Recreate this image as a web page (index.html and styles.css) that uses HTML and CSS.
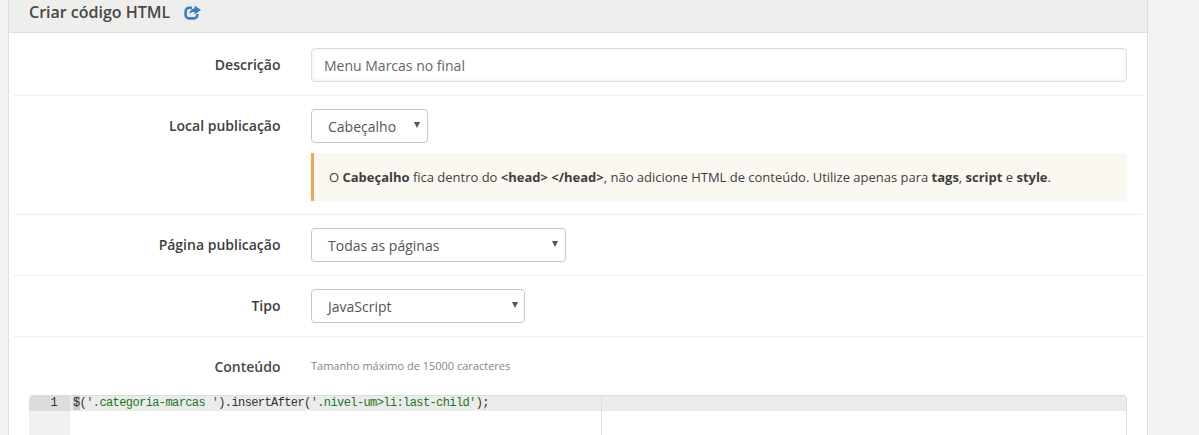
FILE: index.html
```html
<!DOCTYPE html>
<html lang="pt">
<head>
<meta charset="utf-8">
<title>Criar código HTML</title>
<link rel="stylesheet" href="styles.css">
</head>
<body>
<div class="panel">
  <header class="panel-head">
    <h1 class="title">Criar código HTML</h1>
    <svg class="share" viewBox="0 0 17 15" width="17" height="15" aria-hidden="true">
      <path fill="none" stroke="#3a7cc0" stroke-width="2.6" d="M8 2.800H5.200a3.600 3.600 0 0 0-3.600 3.600v3.400a3.600 3.600 0 0 0 3.600 3.600h4.600a3.600 3.600 0 0 0 3.600-3.600V9"/>
      <path fill="#3a7cc0" d="M10.500.5L17 5l-6.500 4.500V7C8 7 6.500 7.500 5.500 9.500c0-3.500 2-6 5-6z"/>
    </svg>
  </header>
  <div class="row row-desc">
    <label class="label">Descrição</label>
    <div class="field"><input class="input" type="text" value="Menu Marcas no final"></div>
  </div>
  <div class="row row-local">
    <label class="label">Local publicação</label>
    <div class="field">
      <div class="select select-local">Cabeçalho</div>
      <p class="notice">O <b>Cabeçalho</b> fica dentro do <b>&lt;head&gt; &lt;/head&gt;</b>, não adicione HTML de conteúdo. Utilize apenas para <b>tags</b>, <b>script</b> e <b>style</b>.</p>
    </div>
  </div>
  <div class="row row-select">
    <label class="label">Página publicação</label>
    <div class="field"><div class="select select-page">Todas as páginas</div></div>
  </div>
  <div class="row row-select">
    <label class="label">Tipo</label>
    <div class="field"><div class="select select-type">JavaScript</div></div>
  </div>
  <div class="row row-content">
    <label class="label label-content">Conteúdo</label>
    <div class="field"><small class="hint">Tamanho máximo de 15000 caracteres</small></div>
  </div>
  <div class="editor">
    <div class="gutter"><div class="gutter-cell">1</div></div>
    <div class="code">
      <div class="line"><span class="cursor">$</span>(<span class="str">'.categoria-marcas '</span>).insertAfter(<span class="str">'.nivel-um&gt;li:last-child'</span>);</div>
      <div class="margin-line"></div>
    </div>
  </div>
</div>
</body>
</html>
```
FILE: styles.css
```css
* { box-sizing: border-box; }
html, body { margin: 0; height: 100%; overflow: hidden; }
body {
  background: #f3f3f2;
  font-family: "Open Sans", sans-serif;
  font-size: 14px;
  color: #404040;
}
.panel {
  width: 1140px;
  height: 435px;
  margin-left: 8px;
  background: #fff;
  border-left: 1px solid #dedede;
  border-right: 1px solid #dedede;
  overflow: hidden;
}
.panel-head {
  height: 33px;
  padding: 0 0 8px 20px;
  display: flex;
  align-items: center;
  gap: 14px;
  background: #eeeeec;
  border-bottom: 1px solid #dedede;
}
.title {
  margin: 0;
  font-size: 16px;
  font-weight: 600;
  color: #484848;
  line-height: 24px;
}
.share { display: block; }
.row {
  margin: 0 4px 0 5px;
  display: flex;
  align-items: flex-start;
  border-bottom: 1px solid #eeeeee;
}
.row-desc { height: 63px; padding-top: 15px; }
.row-local { height: 119px; padding-top: 13px; }
.row-select { height: 61px; padding-top: 13px; }
.row-content { border-bottom: 0; height: 58px; padding-top: 19px; }
.label {
  width: 266.500px;
  flex: none;
  text-align: right;
  font-weight: 600;
  line-height: 34px;
  color: #404040;
}
.label-content { line-height: 22px; color: #4a4a4a; }
.field { margin-left: 30.500px; width: 816px; }
.input {
  display: block;
  width: 100%;
  height: 34px;
  padding: 0 12px;
  border: 1px solid #dedede;
  border-radius: 4px;
  font: 14px "Open Sans", sans-serif;
  color: #666;
  background: #fff;
  box-shadow: inset 0 0 4px rgba(0, 0, 0, .08);
}
.select {
  position: relative;
  height: 34px;
  padding: 0 16px;
  border: 1px solid #c8c8c8;
  border-radius: 4px;
  line-height: 33px;
  color: #555;
  background: #fff;
}
.select::after {
  content: "";
  position: absolute;
  right: 7px;
  top: 12px;
  border-left: 3px solid transparent;
  border-right: 3px solid transparent;
  border-top: 6px solid #555;
}
.select-local { width: 117px; }
.select-page { width: 255px; }
.select-type { width: 214px; }
.select-type::after { right: 6px; }
.notice {
  margin: 10px 0 0;
  height: 48px;
  padding: 0 0 0 15px;
  font-size: 13px;
  line-height: 48px;
  letter-spacing: -.01px;
  white-space: nowrap;
  background: #fbf8f2;
  border-left: 3px solid #eea84f;
}
.notice b { font-weight: 700; }
.hint {
  display: block;
  margin-top: -1px;
  font-size: 11px;
  line-height: 22px;
  color: #858585;
}
.editor {
  margin: 0 20px 0 20px;
  height: 60px;
  display: flex;
  border: 1px solid #dcdcdc;
  border-width: 1px 1px 0 0;
  border-radius: 4px 4px 0 0;
  overflow: hidden;
  font: 12px/15px "Liberation Mono", monospace;
  letter-spacing: -.6px;
  color: #333;
}
.gutter {
  width: 41px;
  flex: none;
  background: #f0f0f0;
}
.gutter-cell {
  height: 15px;
  padding-right: 13px;
  text-align: right;
  background: #dcdcdc;
  color: #333;
}
.code { position: relative; flex: 1; }
.line { height: 15px; padding-left: 3px; background: #ebebeb; white-space: pre; }
.cursor { background: #c8c8c8; }
.str { color: #1a7a1a; }
.margin-line {
  position: absolute;
  left: 531px;
  top: 0;
  bottom: 0;
  width: 1px;
  background: #dddddd;
}
```
